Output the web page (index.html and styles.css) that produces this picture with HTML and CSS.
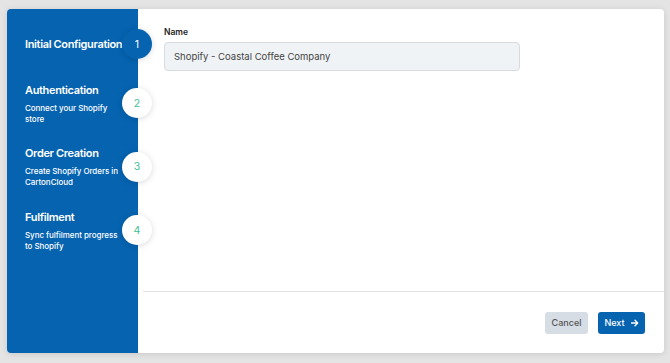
FILE: index.html
```html
<!DOCTYPE html>
<html lang="en">
<head>
  <meta charset="UTF-8" />
  <meta name="viewport" content="width=device-width, initial-scale=1" />
  <title>Shopify Integration</title>
  <link rel="stylesheet" href="styles.css">
</head>
<body>
  <div class="modal">
    <div class="steps">
      <div class="step active">
        <div class="step-text">
          <div class="step-title">Initial Configuration</div>
        </div>
        <div class="step-num">1</div>
      </div>
      <div class="step">
        <div class="step-text">
          <div class="step-title">Authentication</div>
          <div class="step-sub">Connect your Shopify<br>store</div>
        </div>
        <div class="step-num">2</div>
      </div>
      <div class="step">
        <div class="step-text">
          <div class="step-title">Order Creation</div>
          <div class="step-sub">Create Shopify Orders in<br>CartonCloud</div>
        </div>
        <div class="step-num">3</div>
      </div>
      <div class="step">
        <div class="step-text">
          <div class="step-title">Fulfilment</div>
          <div class="step-sub">Sync fulfilment progress<br>to Shopify</div>
        </div>
        <div class="step-num">4</div>
      </div>
    </div>

    <div class="main">
      <div class="content">
        <label class="field-label" for="name">Name</label>
        <input id="name" class="field-input" type="text" value="Shopify - Coastal Coffee Company" />
      </div>
      <div class="footer">
        <button class="btn cancel">Cancel</button>
        <button class="btn next">Next
          <svg width="8" height="8" viewBox="0 0 8 8"><path d="M0.5 4h6M4 1.3L6.7 4 4 6.7" fill="none" stroke="#fff" stroke-width="1.3" stroke-linecap="round" stroke-linejoin="round"/></svg>
        </button>
      </div>
    </div>
  </div>
</body>
</html>
```

FILE: styles.css
```css
body {
  margin: 0;
  background: #e4e4e4;
  font-family: 'Inter', 'Liberation Sans', sans-serif;
  padding: 9px 6px 10px 7px;
}
.modal {
  display: flex;
  width: 657px;
  height: 344px;
  background: white;
  border-radius: 4px;
  box-shadow: 0 1px 6px rgba(0, 0, 0, 0.12);
  overflow: hidden;
}
.steps {
  width: 131px;
  flex-shrink: 0;
  background: #0563b0;
  padding: 20px 0 0 18px;
  box-sizing: border-box;
  display: flex;
  flex-direction: column;
  gap: 20.5px;
  position: relative;
  z-index: 1;
}
.step {
  display: flex;
  align-items: center;
  margin-right: -14px;
}
.step.active {
  margin-bottom: 2px;
}
.step-text {
  color: white;
  width: 100px;
  flex-shrink: 0;
  white-space: nowrap;
}
.step-title {
  font-size: 11px;
  font-weight: 600;
  line-height: 16px;
  letter-spacing: -0.35px;
}
.step-sub {
  font-size: 8px;
  line-height: 11px;
  margin-top: 5px;
  font-weight: 500;
  letter-spacing: -0.05px;
}
.step-num {
  width: 30px;
  height: 30px;
  margin-left: -3px;
  border-radius: 50%;
  background: white;
  color: #3fbf97;
  font-size: 10.5px;
  display: flex;
  align-items: center;
  justify-content: center;
  box-shadow: 0 1px 6px rgba(0, 0, 0, 0.15);
  flex-shrink: 0;
}
.step.active .step-num {
  background: #0563b0;
  color: white;
}
.main {
  flex: 1;
  display: flex;
  flex-direction: column;
}
.content {
  flex: 1;
  padding: 18px 0 0 26px;
  display: flex;
  flex-direction: column;
}
.field-label {
  font-size: 8.5px;
  font-weight: 600;
  color: #222;
  margin-bottom: 5px;
}
.field-input {
  width: 356px;
  height: 29px;
  box-sizing: border-box;
  background: #f0f3f6;
  border: 1px solid #d6dbe0;
  border-radius: 4px;
  padding: 0 9px;
  font-family: inherit;
  font-size: 9.5px;
  color: #444;
  outline: none;
}
.footer {
  height: 62px;
  margin-left: 5px;
  border-top: 1px solid #e2e2e2;
  display: flex;
  justify-content: flex-end;
  align-items: center;
  gap: 10px;
  padding-right: 19px;
  box-sizing: border-box;
}
.btn {
  height: 22px;
  border: none;
  border-radius: 3px;
  font-family: inherit;
  font-size: 9px;
  font-weight: 500;
  cursor: pointer;
  display: flex;
  align-items: center;
  justify-content: center;
  gap: 6px;
}
.cancel {
  width: 43px;
  background: #d6dde5;
  color: #555;
}
.next {
  width: 47px;
  background: #0563b0;
  color: white;
}
```
